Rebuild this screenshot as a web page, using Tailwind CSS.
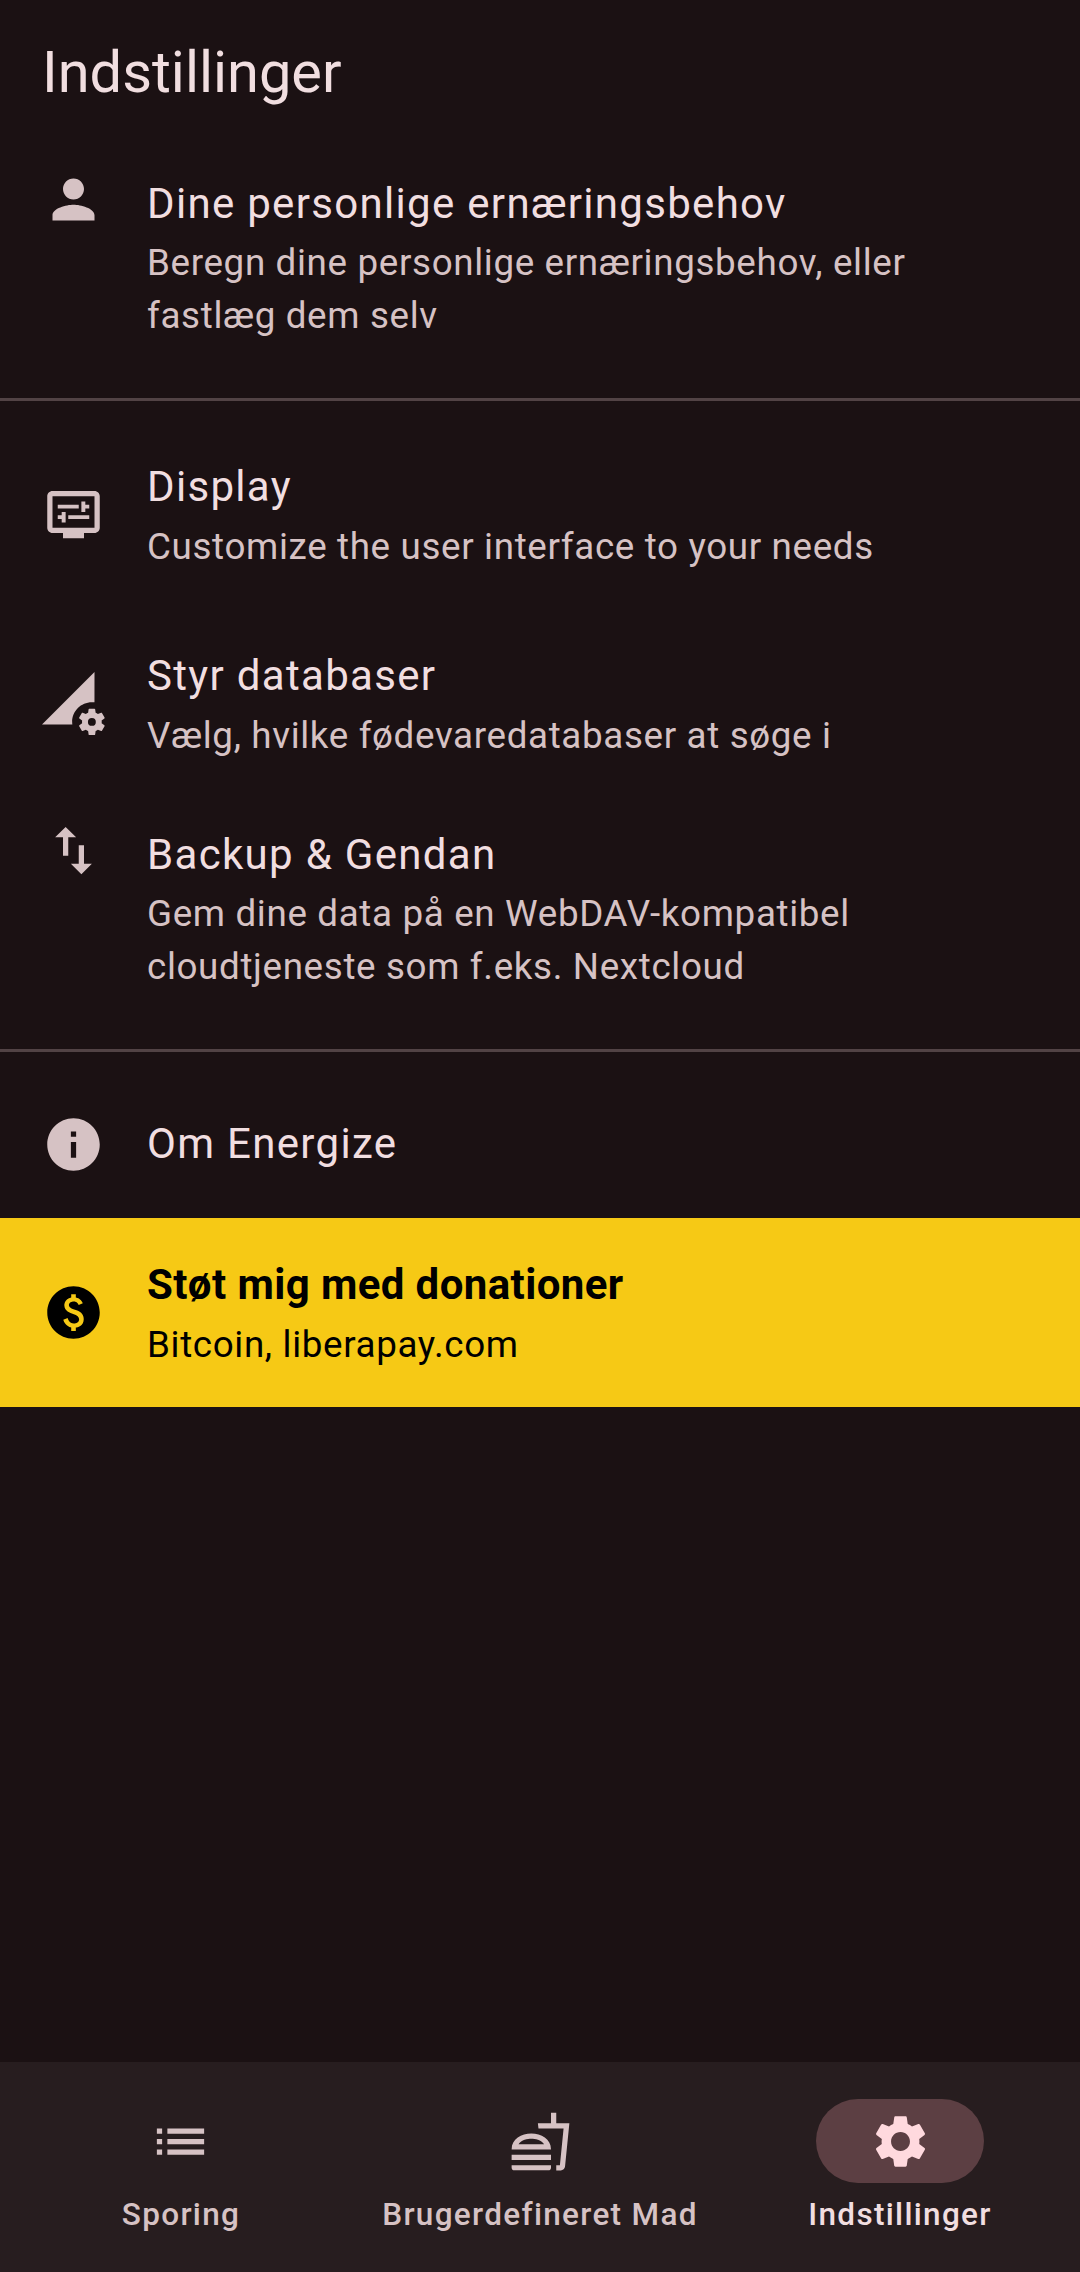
<!DOCTYPE html>
<html lang="da">
<head>
<meta charset="utf-8">
<title>Indstillinger</title>
<script src="https://cdn.jsdelivr.net/npm/@tailwindcss/browser@4"></script>
</head>
<body class="bg-[#1b1113] font-['Roboto',sans-serif]">
<div class="flex h-[2272px] w-[1080px] flex-col overflow-hidden text-[42px] leading-[63px] tracking-[1.3125px] text-[#f1dee0]">
  <header class="flex h-[147px] items-center px-[42px] pb-[4px] text-[57.75px] leading-[74px] tracking-normal">
    <h1>Indstillinger</h1>
  </header>

  <main class="flex-1">
    <section class="flex h-[231px] px-[42px] pt-[21px]">
      <svg class="size-[63px] shrink-0 fill-[#d6c2c4]" viewBox="0 0 24 24"><path d="M12 12c2.21 0 4-1.79 4-4s-1.79-4-4-4-4 1.79-4 4 1.79 4 4 4zm0 2c-2.67 0-8 1.34-8 4v2h16v-2c0-2.66-5.33-4-8-4z"/></svg>
      <div class="ml-[42px] pt-1">
        <h2>Dine personlige ernæringsbehov</h2>
        <p class="pt-[2px] text-[36.75px] leading-[52.5px] tracking-[0.656px] text-[#d6c2c4]">Beregn dine personlige ernæringsbehov, eller<br>fastlæg dem selv</p>
      </div>
    </section>
    <div class="flex h-[42px] items-center"><div class="h-[3px] w-full bg-[#524345]"></div></div>

    <section class="flex h-[189px] items-center px-[42px]">
      <svg class="size-[63px] shrink-0 fill-[#d6c2c4]" viewBox="0 0 24 24"><path d="M20 3H4c-1.1 0-2 .9-2 2v12c0 1.1.9 2 2 2h4v2h8v-2h4c1.1 0 2-.9 2-2V5c0-1.1-.9-2-2-2zm0 14H4V5h16v12z"/><path d="M6 8.25h8v1.5H6zM16.5 9.75H18v-1.5h-1.500V7H15v4h1.500zM10 12.250h8v1.500h-8zM7.500 15H9v-4H7.500v1.250H6v1.500h1.500z"/></svg>
      <div class="ml-[42px]">
        <h2>Display</h2>
        <p class="pt-[3px] text-[36.75px] leading-[52.5px] tracking-[0.656px] text-[#d6c2c4]">Customize the user interface to your needs</p>
      </div>
    </section>
    <section class="flex h-[189px] items-center px-[42px]">
      <svg class="size-[63px] shrink-0 overflow-visible fill-[#d6c2c4]" viewBox="0 0 24 24"><path d="M18.990 11.500c.34 0 .67.03 1 .07L20 0 0 20h11.560c-.04-.33-.07-.66-.07-1 0-4.140 3.360-7.500 7.500-7.500z"/><path transform="translate(19 19) scale(.5) translate(-12 -12)" d="M19.500 12c0-.34-.03-.66-.07-.98l2.110-1.650c.19-.15.24-.42.12-.64l-2-3.460c-.12-.22-.39-.3-.61-.22l-2.490 1c-.52-.4-1.080-.73-1.690-.98l-.38-2.650C14.460 2.180 14.250 2 14 2h-4c-.25 0-.46.18-.49.42l-.38 2.650c-.61.25-1.170.59-1.690.98l-2.490-1c-.23-.09-.49 0-.61.22l-2 3.460c-.13.22-.07.49.12.64l2.110 1.650c-.04.32-.07.65-.07.98s.03.66.07.98l-2.110 1.650c-.19.15-.24.42-.12.64l2 3.460c.12.22.39.3.61.22l2.490-1c.52.4 1.080.73 1.690.98l.38 2.650c.03.24.24.42.49.42h4c.25 0 .46-.18.49-.42l.38-2.650c.61-.25 1.170-.59 1.690-.98l2.490 1c.23.09.49 0 .61-.22l2-3.460c.12-.22.07-.49-.12-.64l-2.110-1.650c.04-.32.07-.65.07-.98zM12 15a3 3 0 1 1 0-6 3 3 0 0 1 0 6z"/></svg>
      <div class="ml-[42px]">
        <h2>Styr databaser</h2>
        <p class="pt-[3px] text-[36.75px] leading-[52.5px] tracking-[0.656px] text-[#d6c2c4]">Vælg, hvilke fødevaredatabaser at søge i</p>
      </div>
    </section>
    <section class="flex h-[231px] px-[42px] pt-[21px]">
      <svg class="size-[63px] shrink-0 fill-[#d6c2c4]" viewBox="0 0 24 24"><path d="M9 3L5 6.990h3V14h2V6.990h3L9 3zm7 14.010V10h-2v7.010h-3L15 21l4-3.990h-3z"/></svg>
      <div class="ml-[42px] pt-1">
        <h2>Backup &amp; Gendan</h2>
        <p class="pt-[2px] text-[36.75px] leading-[52.5px] tracking-[0.656px] text-[#d6c2c4]">Gem dine data på en WebDAV-kompatibel<br>cloudtjeneste som f.eks. Nextcloud</p>
      </div>
    </section>
    <div class="flex h-[42px] items-center"><div class="h-[3px] w-full bg-[#524345]"></div></div>

    <section class="flex h-[147px] items-center px-[42px]">
      <svg class="size-[63px] shrink-0 fill-[#d6c2c4]" viewBox="0 0 24 24"><path d="M12 2C6.480 2 2 6.480 2 12s4.480 10 10 10 10-4.480 10-10S17.520 2 12 2zm1 15h-2v-6h2v6zm0-8h-2V7h2v2z"/></svg>
      <h2 class="ml-[42px] pb-[2px]">Om Energize</h2>
    </section>
    <section class="flex h-[189px] items-center bg-[#f6c915] px-[42px] text-black">
      <svg class="size-[63px] shrink-0" viewBox="0 0 24 24"><path d="M12 2C6.480 2 2 6.480 2 12s4.480 10 10 10 10-4.480 10-10S17.520 2 12 2zm.88 15.760V19h-1.750v-1.290c-.74-.18-2.390-.77-3.020-2.960l1.650-.67c.06.22.58 2.090 2.400 2.090.93 0 1.980-.48 1.980-1.610 0-.96-.7-1.460-2.280-2.030-1.100-.39-3.350-1.030-3.350-3.310 0-.1.010-2.400 2.620-2.960V5h1.750v1.240c1.840.32 2.510 1.790 2.660 2.230l-1.580.67c-.11-.35-.59-1.340-1.900-1.340-.7 0-1.810.37-1.810 1.390 0 .95.86 1.310 2.640 1.900 2.400.83 3.010 2.050 3.010 3.450 0 2.630-2.500 3.130-3.020 3.220z"/></svg>
      <div class="ml-[42px]">
        <h2 class="font-bold tracking-[0.394px]">Støt mig med donationer</h2>
        <p class="pt-[3px] text-[36.75px] leading-[52.5px] tracking-[0.656px]">Bitcoin, liberapay.com</p>
      </div>
    </section>
  </main>

  <nav class="grid h-[210px] grid-cols-3 bg-[#271d1f] pt-[37px] text-[31.5px] font-medium leading-[42px] text-[#d6c2c4]">
    <div class="flex flex-col items-center gap-[11px]">
      <div class="flex h-[84px] w-[168px] items-center justify-center"><svg class="size-[63px] fill-[#d6c2c4]" viewBox="0 0 24 24"><path d="M3 13h2v-2H3v2zm0 4h2v-2H3v2zm0-8h2V7H3v2zm4 4h14v-2H7v2zm0 4h14v-2H7v2zM7 7v2h14V7H7z"/></svg></div>
      <span class="pl-[2px]">Sporing</span>
    </div>
    <div class="flex flex-col items-center gap-[11px]">
      <div class="flex h-[84px] w-[168px] items-center justify-center"><svg class="size-[63px] fill-[#d6c2c4]" viewBox="0 0 24 24"><path d="M1 21.980c0 .56.45 1.010 1.010 1.010H15c.56 0 1.010-.45 1.010-1.010V21H1v.98zM8.500 8.990C4.750 8.990 1 11 1 15h15c0-4-3.750-6.010-7.500-6.010zM3.620 13c1.110-1.550 3.470-2.010 4.880-2.010s3.770.46 4.880 2.010H3.620zM1 17h15v2H1zM18 5V1h-2v4h-5l.23 2h9.560l-1.400 14H18v2h1.720c.84 0 1.530-.65 1.630-1.470L23 5h-5z"/></svg></div>
      <span class="whitespace-nowrap">Brugerdefineret Mad</span>
    </div>
    <div class="flex flex-col items-center gap-[11px] text-[#f1dee0]">
      <div class="flex h-[84px] w-[168px] items-center justify-center rounded-full bg-[#5c3f43]"><svg class="size-[63px] fill-[#ffd9de]" viewBox="0 0 24 24"><path d="M19.140 12.940c.04-.3.060-.61.060-.94 0-.32-.02-.64-.07-.94l2.030-1.580c.18-.14.23-.41.12-.61l-1.920-3.320c-.12-.22-.37-.29-.59-.22l-2.390.96c-.5-.38-1.030-.7-1.620-.94l-.36-2.540c-.04-.24-.24-.41-.48-.41h-3.840c-.24 0-.43.17-.47.41l-.36 2.540c-.59.24-1.130.57-1.620.94l-2.390-.96c-.22-.08-.47 0-.59.22L2.740 8.870c-.12.21-.08.47.12.61l2.030 1.580c-.05.3-.09.63-.09.94s.02.64.07.94l-2.030 1.580c-.18.14-.23.41-.12.61l1.920 3.320c.12.22.37.29.59.22l2.390-.96c.5.38 1.030.7 1.620.94l.36 2.540c.05.24.24.41.48.41h3.840c.24 0 .44-.17.47-.41l.36-2.540c.59-.24 1.130-.56 1.620-.94l2.390.96c.22.08.47 0 .59-.22l1.920-3.320c.12-.22.07-.47-.12-.61l-2.010-1.580zM12 15.600c-1.980 0-3.600-1.620-3.600-3.600s1.620-3.600 3.600-3.600 3.600 1.620 3.600 3.600-1.620 3.600-3.600 3.600z"/></svg></div>
      <span>Indstillinger</span>
    </div>
  </nav>
</div>
</body>
</html>
